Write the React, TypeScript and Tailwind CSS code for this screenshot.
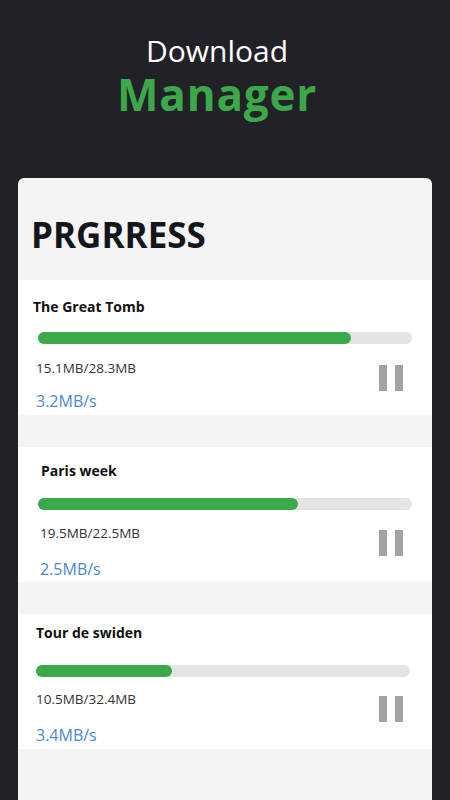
import React from "react";

interface IDownload {
  title: string;
  size: string;
  speed: string;
  percent: number;
  titleCls: string;
  barCls: string;
  infoCls: string;
  speedCls: string;
}

const downloads: IDownload[] = [
  {
    title: "The Great Tomb",
    size: "15.1MB/28.3MB",
    speed: "3.2MB/s",
    percent: 83.6,
    titleCls: "pt-[17px] pb-[15px] pl-[15px]",
    barCls: "ml-5 mr-5",
    infoCls: "pl-[18px] pt-[15px]",
    speedCls: "mt-[13px]",
  },
  {
    title: "Paris week",
    size: "19.5MB/22.5MB",
    speed: "2.5MB/s",
    percent: 69.5,
    titleCls: "pt-[14px] pb-[17px] pl-[23px]",
    barCls: "ml-5 mr-5",
    infoCls: "pl-[22px] pt-[14px]",
    speedCls: "mt-4",
  },
  {
    title: "Tour de swiden",
    size: "10.5MB/32.4MB",
    speed: "3.4MB/s",
    percent: 36.4,
    titleCls: "pt-[9px] pb-[22px] pl-[18px]",
    barCls: "ml-[18px] mr-[22px]",
    infoCls: "pl-[18px] pt-[13px]",
    speedCls: "mt-4",
  },
];

function PauseIcon() {
  return (
    <div className="flex gap-2 mt-[6px]">
      <span className="block w-2 h-[26px] bg-[#a3a3a3]"></span>
      <span className="block w-2 h-[26px] bg-[#a3a3a3]"></span>
    </div>
  );
}

function DownloadItem({ item }: { item: IDownload }) {
  return (
    <div className="h-[135px] bg-white">
      <div
        className={`${item.titleCls} text-sm leading-5 font-bold text-[#111]`}
      >
        {item.title}
      </div>
      <div className={`${item.barCls} h-3 rounded-full bg-[#e4e4e4]`}>
        <div
          className="h-3 rounded-full bg-[#3ba94a]"
          style={{ width: `${item.percent}%` }}
        ></div>
      </div>
      <div className={`${item.infoCls} flex justify-between pr-[29px]`}>
        <div className="flex flex-col">
          <span className="text-[13.5px] leading-[18px] text-[#333]">
            {item.size}
          </span>
          <span
            className={`${item.speedCls} text-base leading-[22px] text-[#4f85d3]`}
          >
            {item.speed}
          </span>
        </div>
        <PauseIcon />
      </div>
    </div>
  );
}

export default function App() {
  return (
    <div
      className="w-[450px] h-[800px] overflow-hidden bg-[#222128] flex flex-col"
      style={{ fontFamily: '"Open Sans", "Liberation Sans", sans-serif' }}
    >
      <div className="pt-[33px] flex flex-col items-center pr-4">
        <div className="text-[30px] leading-9 text-white">Download</div>
        <div className="mt-px text-[44px] leading-[48px] font-bold tracking-[0.8px] text-[#3ba94a]">
          Manager
        </div>
      </div>
      <div className="mx-[18px] mt-[60px] flex-1 rounded-t-md bg-[#f4f4f4]">
        <div className="h-[102px] pt-[37px] pl-[13px] text-[35px] leading-10 font-bold text-[#14161c]">
          PRGRRESS
        </div>
        <div className="flex flex-col gap-8">
          {downloads.map((d) => (
            <DownloadItem key={d.title} item={d} />
          ))}
        </div>
      </div>
    </div>
  );
}
